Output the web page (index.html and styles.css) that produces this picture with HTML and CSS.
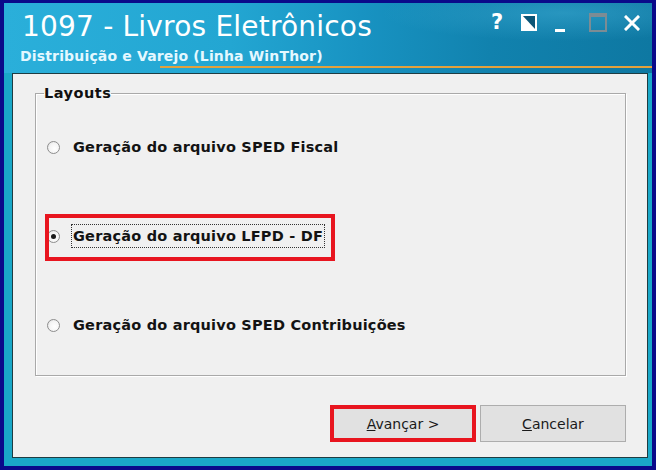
FILE: index.html
```html
<!DOCTYPE html>
<html lang="pt-BR">
<head>
<meta charset="utf-8">
<title>1097 - Livros Eletrônicos</title>
<link rel="stylesheet" href="styles.css">
</head>
<body>
<div class="window">
  <div class="titlebar">
    <div class="title-row">
      <h1 class="title">1097 - Livros Eletrônicos</h1>
      <div class="controls">
        <span class="ctl help">?</span>
        <svg class="ctl restore" width="16" height="17" viewBox="0 0 16 17">
          <rect x="1" y="1" width="14" height="15" fill="#0b5577" stroke="#fff" stroke-width="2"/>
          <polygon points="1,1 1,16 15,16" fill="#fff"/>
        </svg>
        <span class="ctl min"></span>
        <span class="ctl max"></span>
        <svg class="ctl close" width="16" height="16" viewBox="0 0 16 16">
          <path d="M2 2 L14 14 M14 2 L2 14" stroke="#fff" stroke-width="3" stroke-linecap="square"/>
        </svg>
      </div>
    </div>
    <div class="subtitle">Distribuição e Varejo (Linha WinThor)</div>
    <div class="accent"></div>
  </div>
  <div class="content">
    <fieldset class="group">
      <legend class="legend">Layouts</legend>
      <label class="option">
        <span class="radio"></span>
        <span class="text">Geração do arquivo SPED Fiscal</span>
      </label>
      <label class="option selected">
        <span class="radio checked"></span>
        <span class="text focus">Geração do arquivo LFPD - DF</span>
        <span class="mark"></span>
      </label>
      <label class="option">
        <span class="radio"></span>
        <span class="text">Geração do arquivo SPED Contribuições</span>
      </label>
    </fieldset>
    <div class="buttons">
      <button class="btn primary"><u>A</u>vançar &gt;</button>
      <button class="btn"><u>C</u>ancelar</button>
    </div>
  </div>
</div>
</body>
</html>
```

FILE: styles.css
```css
html, body {
  margin: 0;
  padding: 0;
  background: #0b0b8c;
}

.window {
  width: 656px;
  height: 470px;
  box-sizing: border-box;
  border-style: solid;
  border-color: #0a0a8a;
  border-width: 3px 4px 4px 4px;
  padding: 0 4px 8px 8px;
  display: flex;
  flex-direction: column;
  background-color: #1aa8c8;
  background-image:
    radial-gradient(ellipse 260px 40px at 560px 10px, rgba(60, 170, 210, 0.55), rgba(60, 170, 210, 0) 70%),
    linear-gradient(90deg, #2aafda 0%, #23a6d2 35%, #1893c2 55%, #1182ae 75%, #0e78a2 100%);
  background-size: 100% 70px, 100% 70px;
  background-repeat: no-repeat;
  font-family: "DejaVu Sans", "Liberation Sans", sans-serif;
}

.titlebar {
  height: 70px;
  display: flex;
  flex-direction: column;
  flex: none;
}

.title-row {
  display: flex;
  justify-content: space-between;
  align-items: flex-start;
}

.title {
  margin: 10px 0 0 0;
  padding-left: 10px;
  font-family: "DejaVu Sans", sans-serif;
  font-weight: normal;
  font-size: 28px;
  line-height: 28px;
  color: #ffffff;
  letter-spacing: 0.2px;
}

.controls {
  display: flex;
  align-items: center;
  height: 19px;
  margin-top: 10px;
  margin-right: 8px;
}

.ctl {
  display: block;
  flex: none;
}

.help {
  color: #ffffff;
  font-weight: bold;
  font-size: 21px;
  line-height: 19px;
  width: 12px;
}

.restore {
  margin-left: 18px;
}

.min {
  width: 10px;
  height: 3px;
  background: #ffffff;
  margin-left: 18px;
  align-self: flex-end;
}

.max {
  width: 18px;
  height: 19px;
  box-sizing: border-box;
  border: 2px solid #7c8c94;
  border-top-width: 4px;
  margin-left: 24px;
}

.close {
  margin-left: 17px;
}

.subtitle {
  margin-top: 8px;
  padding-left: 8px;
  font-weight: bold;
  font-size: 14px;
  line-height: 14px;
  color: #e4f8ff;
  letter-spacing: 0.16px;
}

.accent {
  height: 2px;
  margin: 3px -4px 5px 148px;
  background: #e3a13c;
}

.content {
  flex: 1;
  box-sizing: border-box;
  border: 1px solid #1e3c42;
  background: #f0f0f0;
  padding: 11px 21px 0 22px;
  display: flex;
  flex-direction: column;
}

.group {
  margin: 0;
  height: 291px;
  box-sizing: border-box;
  border: 1px solid #a9a9a9;
  box-shadow: 1px 1px 0 #ffffff, inset 1px 1px 0 #ffffff;
  padding: 34px 0 0 11px;
  display: flex;
  flex-direction: column;
  gap: 65px;
}

.legend {
  margin-left: -3px;
  padding: 0;
  font-weight: bold;
  font-size: 14.5px;
  line-height: 16px;
  color: #111111;
  letter-spacing: 0.5px;
}

.option {
  position: relative;
  display: flex;
  align-items: center;
  height: 24px;
}

.radio {
  width: 13px;
  height: 13px;
  box-sizing: border-box;
  border-radius: 50%;
  border: 1px solid #8d8d8d;
  background: radial-gradient(circle at 60% 60%, #ffffff 0%, #f4f4f4 55%, #d9d9d9 100%);
  margin-right: 12px;
  flex: none;
  display: flex;
  align-items: center;
  justify-content: center;
}

.radio.checked::after {
  content: "";
  width: 5px;
  height: 5px;
  border-radius: 50%;
  background: #1a1a1a;
}

.text {
  font-weight: bold;
  font-size: 14.5px;
  line-height: 22px;
  color: #131313;
  padding: 0 1px;
  border: 1px dotted transparent;
  margin-left: -1px;
  letter-spacing: 0.2px;
}

.text.focus {
  border-color: #333333;
}

.mark {
  position: absolute;
  left: -2px;
  top: -10px;
  width: 290px;
  height: 47px;
  box-sizing: border-box;
  border: 4px solid #e8151f;
  pointer-events: none;
}

.buttons {
  display: flex;
  justify-content: flex-end;
  gap: 4px;
  margin-top: 29px;
}

.btn {
  width: 146px;
  height: 37px;
  box-sizing: border-box;
  border: 1px solid #adadad;
  background: #e1e1e1;
  font-family: "DejaVu Sans", sans-serif;
  font-size: 14px;
  color: #1a1a1a;
  padding: 0;
}

.btn.primary {
  border-color: #2d7fc4;
  outline: 4px solid #e8151f;
  outline-offset: -4px;
}
```
